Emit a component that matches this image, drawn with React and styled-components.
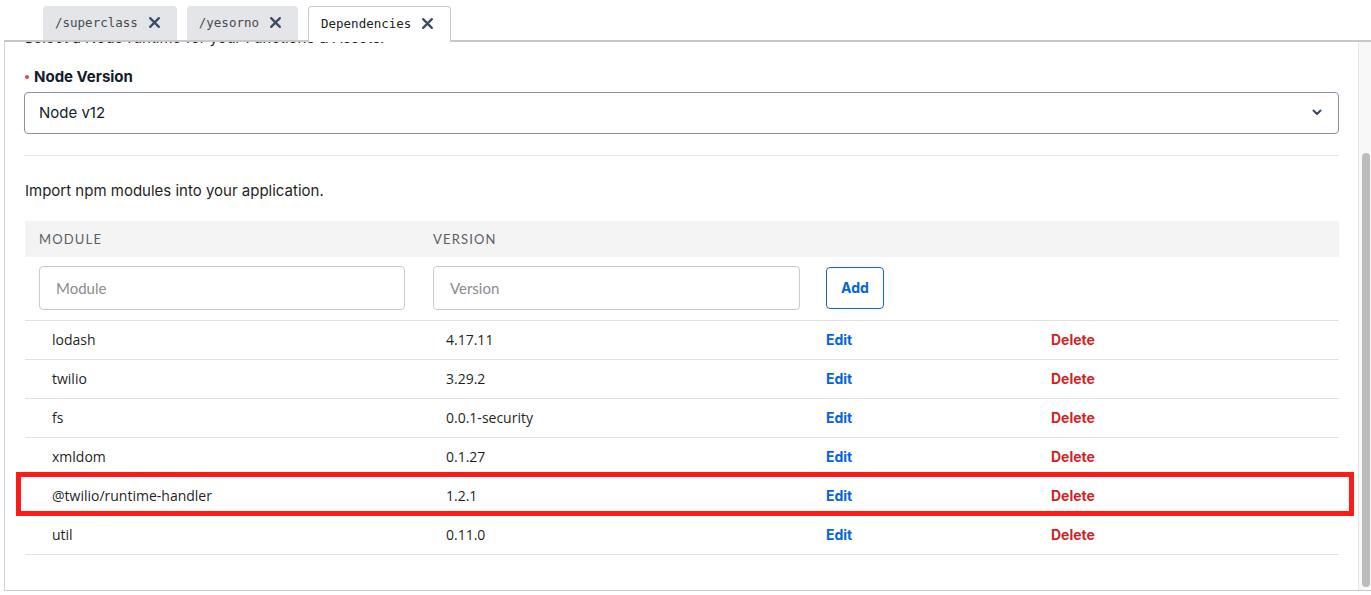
import React from 'react'
import styled, { createGlobalStyle } from 'styled-components'

const GlobalStyle = createGlobalStyle`
  html, body {
    margin: 0;
    padding: 0;
    background: #f2f2f2;
    font-family: Inter, 'Liberation Sans', sans-serif;
    color: #1f1f1f;
  }
  * { box-sizing: border-box; }
`

const Page = styled.div`
  width: 1371px;
  height: 595px;
  display: flex;
  flex-direction: column;
  background: #fff;
  overflow: hidden;
`

const TabBar = styled.div`
  display: flex;
  gap: 10px;
  height: 40px;
  padding: 6px 0 0 43px;
  position: relative;
  z-index: 2;
`

const Tab = styled.div`
  display: flex;
  align-items: center;
  gap: 10px;
  height: ${p => (p.active ? '36px' : '34px')};
  padding: 0 16px 2px ${p => (p.active ? '12px' : '12px')};
  border-radius: 4px 4px 0 0;
  background: ${p => (p.active ? '#fff' : '#e3e5e9')};
  border: ${p => (p.active ? '1px solid #c8c8c8' : 'none')};
  border-bottom: none;
  font-family: 'DejaVu Sans Mono', 'Liberation Mono', monospace;
  font-size: 12.5px;
  color: ${p => (p.active ? '#222' : '#4a4a4a')};
`

const Pane = styled.div`
  flex: 0 0 551px;
  margin-left: 4px;
  display: flex;
  border-top: 2px solid #c8c8c8;
  border-left: 1px solid #d4d4d4;
  border-bottom: 1px solid #c8c8c8;
  background: #fff;
  overflow: hidden;
`

const Content = styled.div`
  flex: 1;
  padding: 0 19px 0 19px;
  overflow: hidden;
`

const Intro = styled.p`
  margin: -14px 0 0;
  font-size: 15px;
  line-height: 20px;
`

const Label = styled.div`
  margin-top: 19px;
  display: flex;
  align-items: center;
  gap: 5px;
  font-size: 15px;
  line-height: 20px;
  font-weight: 700;
  color: #121c2d;
  &::before {
    content: '';
    width: 4px;
    height: 4px;
    border-radius: 50%;
    background: #e8434f;
    margin-left: 1px;
  }
`

const Select = styled.div`
  margin-top: 5px;
  height: 42px;
  border: 1px solid #8891aa;
  border-radius: 4px;
  display: flex;
  align-items: center;
  justify-content: space-between;
  padding: 0 16px 1px 14px;
  font-size: 15px;
  color: #121c2d;
`

const Divider = styled.hr`
  margin: 21px 0 0;
  border: 0;
  border-top: 1px solid #e8e8e8;
`

const Lead = styled.p`
  margin: 25px 0 0 1px;
  font-size: 15px;
  line-height: 20px;
  color: #1f1f1f;
`

const Table = styled.div`
  margin: 20px 0 0 1px;
`

const Row = styled.div`
  position: relative;
  display: grid;
  grid-template-columns: 394px 393px 225px 1fr;
  align-items: center;
  height: ${p => p.h || 39}px;
  background: ${p => p.bg || 'transparent'};
  border-bottom: ${p => (p.line ? '1px solid #e1e1e1' : 'none')};
`

const Cell = styled.div`
  padding: 0 14px 2px ${p => p.inset || 14}px;
  font-family: 'Open Sans', 'Liberation Sans', sans-serif;
  font-size: 14px;
  color: #1f1f1f;
`

const HeadCell = styled.div`
  padding: 0 14px 1px;
  font-family: Lato, 'Liberation Sans', sans-serif;
  font-size: 13px;
  letter-spacing: 0.09em;
  text-transform: uppercase;
  color: #5a5f66;
`

const Input = styled.input`
  width: ${p => p.w}px;
  height: 44px;
  border: 1px solid #cacaca;
  border-radius: 4px;
  padding: 0 16px;
  font-family: Lato, 'Liberation Sans', sans-serif;
  font-size: 15px;
  outline: none;
  &::placeholder { color: #8c8c8c; }
`

const AddButton = styled.button`
  width: 58px;
  height: 42px;
  border: 1px solid #1a63d6;
  border-radius: 4px;
  background: #fff;
  color: #0263e0;
  font-family: Inter, 'Liberation Sans', sans-serif;
  font-size: 14px;
  font-weight: 700;
  padding-bottom: 2px;
`

const Action = styled.span`
  font-family: Inter, 'Liberation Sans', sans-serif;
  font-size: 14px;
  font-weight: 700;
  color: ${p => (p.danger ? '#d61f1f' : '#0263e0')};
`

const Highlight = styled.div`
  position: absolute;
  top: -5px;
  left: -9px;
  right: -15px;
  bottom: -1px;
  border: 5px solid #ff1a1a;
  pointer-events: none;
`

const Track = styled.div`
  flex: 0 0 13px;
  background: #f8f8f8;
  border-left: 1px solid #e6e6e6;
  padding: 111px 0 0 3px;
`

const Thumb = styled.div`
  width: 8px;
  height: 434px;
  border-radius: 4px;
  background: #bcbcbc;
`

const Close = () => (
  <svg width="13" height="13" viewBox="0 0 12 12">
    <path d="M2 2 L10 10 M10 2 L2 10" stroke="#3c4a63" strokeWidth="2.1" strokeLinecap="round" />
  </svg>
)

const Chevron = () => (
  <svg width="10" height="7" viewBox="0 0 10 7">
    <path d="M1.5 1.5 L5 5 L8.5 1.5" fill="none" stroke="#394762" strokeWidth="2" strokeLinecap="round" strokeLinejoin="round" />
  </svg>
)

const modules = [
  ['lodash', '4.17.11'],
  ['twilio', '3.29.2'],
  ['fs', '0.0.1-security'],
  ['xmldom', '0.1.27'],
  ['@twilio/runtime-handler', '1.2.1', true],
  ['util', '0.11.0'],
]

const App = () => (
  <Page>
    <GlobalStyle />
    <TabBar>
      <Tab>/superclass <Close /></Tab>
      <Tab>/yesorno <Close /></Tab>
      <Tab active>Dependencies <Close /></Tab>
    </TabBar>
    <Pane>
      <Content>
        <Intro>Select a Node runtime for your Functions &amp; Assets.</Intro>
        <Label>Node Version</Label>
        <Select>
          <span>Node v12</span>
          <Chevron />
        </Select>
        <Divider />
        <Lead>Import npm modules into your application.</Lead>
        <Table>
          <Row h={36} bg="#f4f4f4">
            <HeadCell>Module</HeadCell>
            <HeadCell>Version</HeadCell>
            <div />
            <div />
          </Row>
          <Row h={64} line>
            <Cell><Input w={366} placeholder="Module" /></Cell>
            <Cell><Input w={367} placeholder="Version" /></Cell>
            <Cell><AddButton>Add</AddButton></Cell>
            <div />
          </Row>
          {modules.map(([name, version, marked]) => (
            <Row key={name} line>
              <Cell inset={27}>{name}</Cell>
              <Cell inset={27}>{version}</Cell>
              <Cell><Action>Edit</Action></Cell>
              <Cell><Action danger>Delete</Action></Cell>
              {marked && <Highlight />}
            </Row>
          ))}
        </Table>
      </Content>
      <Track>
        <Thumb />
      </Track>
    </Pane>
  </Page>
)

export default App
